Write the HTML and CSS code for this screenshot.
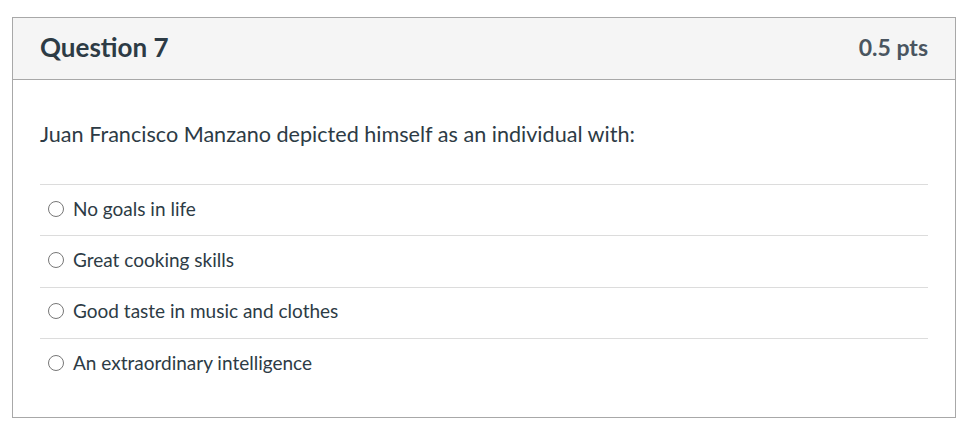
FILE: index.html
```html
<!DOCTYPE html>
<html>
<head>
<meta charset="utf-8">
<link rel="stylesheet" href="styles.css">
</head>
<body>
<div class="card">
  <div class="header">
    <span class="title">Question 7</span>
    <span class="pts">0.5 pts</span>
  </div>
  <div class="body">
    <div class="question">Juan Francisco Manzano depicted himself as an individual with:</div>
    <div class="answers">
      <label class="answer"><span class="radio"></span><span>No goals in life</span></label>
      <label class="answer"><span class="radio"></span><span>Great cooking skills</span></label>
      <label class="answer"><span class="radio"></span><span>Good taste in music and clothes</span></label>
      <label class="answer"><span class="radio"></span><span>An extraordinary intelligence</span></label>
    </div>
  </div>
</div>
</body>
</html>
```
FILE: styles.css
```css
html, body { margin: 0; padding: 0; background: #fff; }
body { font-family: Lato, "Open Sans", sans-serif; color: #2d3b45; }
.card {
  margin: 17px 0 0 12px;
  width: 942px;
  height: 399px;
  border: 1px solid #a8a8a8;
  box-sizing: content-box;
}
.header {
  background: #f5f5f5;
  border-bottom: 1px solid #a8a8a8;
  display: flex;
  align-items: center;
  justify-content: space-between;
  padding: 0 27px 4px;
  box-sizing: border-box;
  height: 62px;
}
.title { font-size: 26px; font-weight: 700; color: #2d3b45; }
.pts { font-size: 23px; font-weight: 700; color: #4a5560; }
.body { padding: 0 27px; }
.question { font-size: 21.6px; padding-top: 41px; line-height: 26px; box-sizing: border-box; height: 104px; }
.answers { border-top: 1px solid #dcdcdc; }
.answer {
  display: flex;
  align-items: center;
  border-bottom: 1px solid #dcdcdc;
  font-size: 19px;
  padding-bottom: 4px;
  box-sizing: border-box;
  height: 51.33px;
}
.answer:last-child { border-bottom: none; }
.radio {
  width: 16px; height: 16px;
  border: 1px solid #777;
  border-radius: 50%;
  margin: 1px 9px 0 8px;
  box-sizing: border-box;
  flex: none;
}
```
